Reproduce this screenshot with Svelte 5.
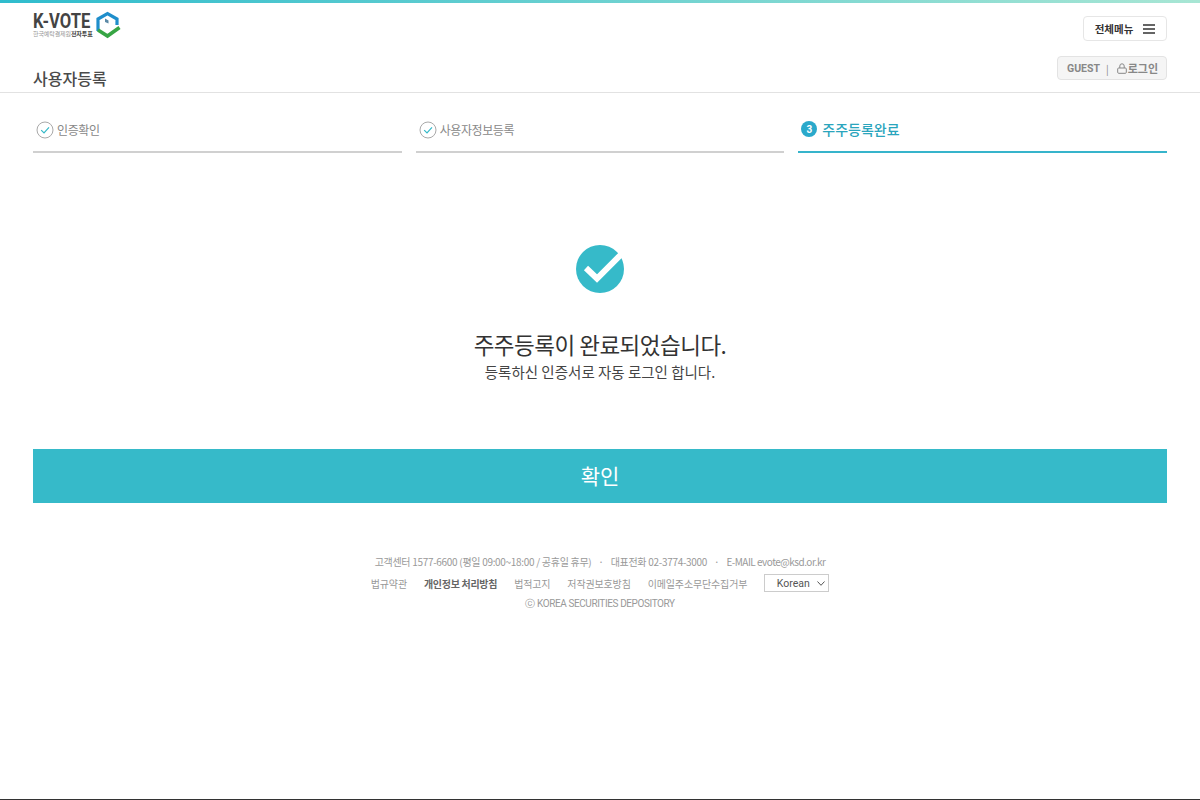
<script>
	const steps = [
		{ label: '인증확인', done: true },
		{ label: '사용자정보등록', done: true },
		{ label: '주주등록완료', done: false, num: 3 }
	];

	const links = [
		{ label: '법규약관' },
		{ label: '개인정보 처리방침', strong: true },
		{ label: '법적고지' },
		{ label: '저작권보호방침' },
		{ label: '이메일주소무단수집거부' }
	];
</script>

<div class="page">
	<div class="topbar"></div>

	<header class="header">
		<div class="header-left">
			<div class="logo">
				<div class="logo-text">
					<span class="logo-name">K-VOTE</span>
					<span class="logo-sub">한국예탁결제원<b>전자투표</b></span>
				</div>
				<svg class="logo-mark" width="26" height="28" viewBox="0 0 26 28">
					<path d="M3 20 V8 L12.5 2.5 L22 8 V14" fill="none" stroke="#1f8ecb" stroke-width="3.2" />
					<path d="M3 19 L12.5 25 L24.5 16.5" fill="none" stroke="#37a544" stroke-width="3.6" />
					<path d="M10 7.5 L13.5 9.5 L13.5 12.5 L10 11 Z" fill="#5b89a6" />
				</svg>
			</div>
			<h1 class="title">사용자등록</h1>
		</div>
		<div class="header-right">
			<button class="menu-btn">
				<span>전체메뉴</span>
				<svg width="12" height="10" viewBox="0 0 12 10">
					<path d="M0 1H12M0 5H12M0 9H12" stroke="#333" stroke-width="1.7" />
				</svg>
			</button>
			<div class="guest">
				<span class="guest-name">GUEST</span>
				<span class="guest-sep">|</span>
				<svg width="10" height="11" viewBox="0 0 10 11">
					<path d="M2.8 5V3a2.2 2.2 0 0 1 4.4 0v2" fill="none" stroke="#888" />
					<rect x="0.7" y="5" width="8.6" height="5.3" rx="1" fill="none" stroke="#888" />
				</svg>
				<span class="guest-login">로그인</span>
			</div>
		</div>
	</header>

	<main class="main">
		<ol class="steps">
			{#each steps as step}
				<li class="step" class:active={!step.done}>
					{#if step.done}
						<svg width="18" height="18" viewBox="0 0 18 18">
							<circle cx="9" cy="9" r="8" fill="#fff" stroke="#a9a9a9" />
							<path d="M5.2 9.2 L8 12 L13 6.4" fill="none" stroke="#35b9c8" stroke-width="1.2" />
						</svg>
					{:else}
						<span class="step-num">{step.num}</span>
					{/if}
					<span>{step.label}</span>
				</li>
			{/each}
		</ol>

		<section class="result">
			<svg class="result-icon" width="48" height="48" viewBox="0 0 48 48">
				<circle cx="24" cy="24" r="24" fill="#36bac9" />
				<path d="M10 23 L21 33.5 L46 8.5" fill="none" stroke="#fff" stroke-width="6" />
			</svg>
			<h2 class="result-title">주주등록이 완료되었습니다.</h2>
			<p class="result-desc">등록하신 인증서로 자동 로그인 합니다.</p>
		</section>

		<button class="confirm">확인</button>
	</main>

	<footer class="footer">
		<div class="footer-row">
			<span>고객센터 1577-6600 (평일 09:00~18:00 / 공휴일 휴무)</span>
			<span class="dot">·</span>
			<span>대표전화 02-3774-3000</span>
			<span class="dot">·</span>
			<span class="email">E-MAIL evote@ksd.or.kr</span>
		</div>
		<div class="footer-links">
			{#each links as link}
				<span class:strong={link.strong}>{link.label}</span>
			{/each}
			<div class="lang">
				<span>Korean</span>
				<svg width="8" height="5" viewBox="0 0 8 5">
					<path d="M0.5 0.5 L4 4.3 L7.5 0.5" fill="none" stroke="#555" />
				</svg>
			</div>
		</div>
		<div class="copyright">ⓒ KOREA SECURITIES DEPOSITORY</div>
	</footer>
</div>

<style>
	:global(body) {
		background: #fff;
	}

	.page {
		height: 800px;
		box-sizing: border-box;
		display: flex;
		flex-direction: column;
		border-bottom: 1px solid #333;
		font-family: 'Noto Sans CJK KR', 'Noto Sans', sans-serif;
		color: #333;
		overflow: hidden;
	}

	.topbar {
		height: 3px;
		background: linear-gradient(90deg, #2fbccd, #a8e6d4);
	}

	.header {
		height: 89px;
		padding: 0 33px;
		display: flex;
		justify-content: space-between;
		border-bottom: 1px solid #e2e2e2;
	}

	.header-left {
		display: flex;
		flex-direction: column;
		justify-content: space-between;
	}

	.logo {
		display: flex;
		align-items: flex-start;
		gap: 4px;
		padding-top: 8px;
	}

	.logo-text {
		width: 58px;
		height: 26px;
		display: flex;
		flex-direction: column;
	}

	.logo-name {
		height: 19px;
		font-family: 'Roboto', sans-serif;
		font-weight: 700;
		font-size: 20px;
		line-height: 20px;
		color: #444;
		white-space: nowrap;
		transform: scaleX(0.83);
		transform-origin: left;
	}

	.logo-sub {
		height: 7px;
		font-size: 6px;
		line-height: 7px;
		color: #999;
		white-space: nowrap;
		letter-spacing: -0.1px;
	}

	.logo-sub b {
		color: #444;
	}

	.title {
		margin: 0 0 2px;
		font-size: 16px;
		line-height: 24px;
		font-weight: 500;
		color: #4a4a4a;
	}

	.header-right {
		display: flex;
		flex-direction: column;
		align-items: flex-end;
		gap: 15px;
		padding-top: 13px;
	}

	.menu-btn {
		width: 84px;
		height: 25px;
		padding: 0;
		display: flex;
		align-items: center;
		justify-content: center;
		gap: 10px;
		background: #fff;
		border: 1px solid #e6e6e6;
		border-radius: 4px;
		font: inherit;
		font-size: 10.5px;
		font-weight: 700;
		color: #333;
	}

	.guest {
		width: 110px;
		height: 24px;
		box-sizing: border-box;
		display: flex;
		align-items: center;
		justify-content: center;
		gap: 1px;
		background: #f5f5f5;
		border: 1px solid #e3e3e3;
		border-radius: 4px;
		font-size: 11px;
		font-weight: 700;
		color: #888;
	}

	.guest-name {
		font-family: 'Roboto', sans-serif;
		font-size: 10.5px;
		margin-left: 1px;
	}

	.guest-sep {
		margin: 0 7px 0 5px;
		font-weight: 400;
		font-size: 10px;
	}

	.main {
		padding: 0 33px;
	}

	.steps {
		list-style: none;
		margin: 0;
		padding: 0;
		display: grid;
		grid-template-columns: repeat(3, 1fr);
		gap: 14px;
	}

	.step {
		height: 60px;
		box-sizing: border-box;
		padding: 15px 3px 0;
		display: flex;
		align-items: center;
		gap: 3px;
		border-bottom: 2px solid #d0d0d0;
		font-size: 12px;
		letter-spacing: -0.4px;
		color: #888;
	}

	.step.active {
		gap: 5px;
		padding: 14px 3px 0;
		border-bottom-color: #36b4cb;
		font-size: 14px;
		letter-spacing: 0;
		font-weight: 500;
		color: #2aa5bd;
	}

	.step-num {
		width: 16px;
		height: 16px;
		border-radius: 50%;
		background: #2aa9cb;
		color: #fff;
		font-family: 'Roboto', sans-serif;
		font-size: 10px;
		font-weight: 700;
		display: flex;
		align-items: center;
		justify-content: center;
	}

	.result {
		display: flex;
		flex-direction: column;
		align-items: center;
		padding-top: 92px;
	}

	.result-title {
		margin: 33px 0 0;
		font-size: 22.5px;
		line-height: 36px;
		font-weight: 400;
		color: #333;
		letter-spacing: -0.5px;
	}

	.result-desc {
		margin: 0;
		font-size: 14.5px;
		line-height: 19px;
		color: #444;
	}

	.confirm {
		display: block;
		width: 100%;
		height: 54px;
		margin-top: 68px;
		padding: 0 0 3px;
		border: none;
		background: #36bac9;
		color: #fff;
		font: inherit;
		font-size: 21px;
	}

	.footer {
		margin-top: 48px;
		display: flex;
		flex-direction: column;
		align-items: center;
		font-size: 10px;
		color: #999;
	}

	.footer-row {
		height: 20px;
		display: flex;
		align-items: center;
		gap: 7px;
		letter-spacing: -0.3px;
	}

	.footer-row .email {
		letter-spacing: -0.5px;
	}

	.footer-links {
		height: 20px;
		margin-top: 2px;
		display: flex;
		align-items: center;
		gap: 17px;
		letter-spacing: -0.15px;
	}

	.footer-links .strong {
		font-weight: 700;
		letter-spacing: -0.3px;
		color: #666;
	}

	.lang {
		width: 65px;
		height: 18px;
		box-sizing: border-box;
		display: flex;
		align-items: center;
		justify-content: center;
		gap: 7px;
		padding-left: 8px;
		border: 1px solid #ccc;
		font-family: 'Roboto', sans-serif;
		font-size: 10.5px;
		letter-spacing: 0;
		color: #555;
	}

	.copyright {
		height: 20px;
		margin-top: 1px;
		display: flex;
		align-items: center;
		font-family: 'Roboto', sans-serif;
		letter-spacing: -0.4px;
	}
</style>
